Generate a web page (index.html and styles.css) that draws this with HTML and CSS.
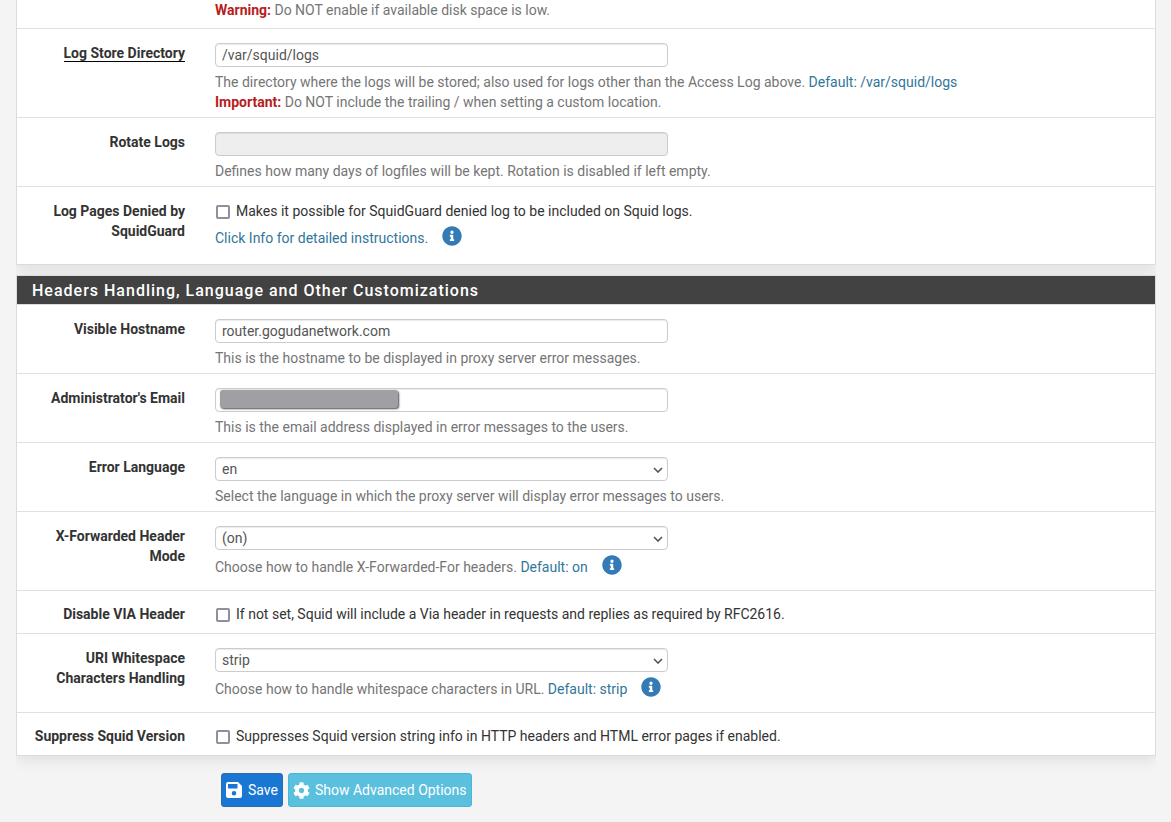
FILE: index.html
```html
<!DOCTYPE html>
<html lang="en">
<head>
    <meta charset="UTF-8">
    <meta name="viewport" content="width=device-width, initial-scale=1.0">
    <title>Squid Proxy Server: General</title>
    <link rel="stylesheet" href="styles.css">
</head>
<body>
    <!-- Shared icons -->
    <svg class="icon-defs" aria-hidden="true">
        <symbol id="icon-info" viewBox="0 0 512 512">
            <path fill="currentColor" d="M256 8C119 8 8 119 8 256s111 248 248 248 248-111 248-248S393 8 256 8zm0 110a42 42 0 1 1 0 84 42 42 0 0 1 0-84zm56 254a12 12 0 0 1-12 12h-88a12 12 0 0 1-12-12v-24a12 12 0 0 1 12-12h12v-64h-12a12 12 0 0 1-12-12v-24a12 12 0 0 1 12-12h64a12 12 0 0 1 12 12v100h12a12 12 0 0 1 12 12z"/>
        </symbol>
    </svg>

    <form class="container">
        <section class="panel panel-first">
            <div class="form-group form-group-cut">
                <div class="control-label"></div>
                <div class="controls">
                    <div class="help-block"><strong class="text-danger">Warning:</strong> Do NOT enable if available disk space is low.</div>
                </div>
            </div>
            <div class="form-group">
                <label class="control-label" for="log_dir"><span class="element-required">Log Store Directory</span></label>
                <div class="controls">
                    <input class="form-control" type="text" id="log_dir" value="/var/squid/logs">
                    <div class="help-block">
                        The directory where the logs will be stored; also used for logs other than the Access Log above. <span class="text-info">Default: /var/squid/logs</span><br>
                        <strong class="text-danger">Important:</strong> Do NOT include the trailing / when setting a custom location.
                    </div>
                </div>
            </div>
            <div class="form-group">
                <label class="control-label" for="log_rotate">Rotate Logs</label>
                <div class="controls">
                    <input class="form-control" type="text" id="log_rotate" disabled>
                    <div class="help-block">Defines how many days of logfiles will be kept. Rotation is disabled if left empty.</div>
                </div>
            </div>
            <div class="form-group">
                <label class="control-label" for="log_sqd">Log Pages Denied by SquidGuard</label>
                <div class="controls">
                    <label class="chkbox"><input type="checkbox" id="log_sqd"> Makes it possible for SquidGuard denied log to be included on Squid logs.</label>
                    <div class="help-block help-info">
                        <span class="text-info">Click Info for detailed instructions.</span>
                        <a class="info-link" href="#" aria-label="Info"><svg><use href="#icon-info"/></svg></a>
                    </div>
                </div>
            </div>
        </section>

        <section class="panel">
            <h2 class="panel-title">Headers Handling, Language and Other Customizations</h2>
            <div class="form-group">
                <label class="control-label" for="visible_hostname">Visible Hostname</label>
                <div class="controls">
                    <input class="form-control" type="text" id="visible_hostname" value="router.gogudanetwork.com">
                    <div class="help-block">This is the hostname to be displayed in proxy server error messages.</div>
                </div>
            </div>
            <div class="form-group">
                <label class="control-label" for="admin_email">Administrator's Email</label>
                <div class="controls">
                    <div class="masked">
                        <input class="form-control" type="text" id="admin_email">
                        <span class="mask"></span>
                    </div>
                    <div class="help-block">This is the email address displayed in error messages to the users.</div>
                </div>
            </div>
            <div class="form-group">
                <label class="control-label" for="error_language">Error Language</label>
                <div class="controls">
                    <div class="select">
                        <select class="form-control" id="error_language">
                            <option>en</option>
                        </select>
                        <svg class="caret" viewBox="0 0 10 6"><path d="M1 1l4 4 4-4"/></svg>
                    </div>
                    <div class="help-block">Select the language in which the proxy server will display error messages to users.</div>
                </div>
            </div>
            <div class="form-group">
                <label class="control-label" for="xforward_mode">X-Forwarded Header Mode</label>
                <div class="controls">
                    <div class="select">
                        <select class="form-control" id="xforward_mode">
                            <option>(on)</option>
                        </select>
                        <svg class="caret" viewBox="0 0 10 6"><path d="M1 1l4 4 4-4"/></svg>
                    </div>
                    <div class="help-block help-info">
                        <span>Choose how to handle X-Forwarded-For headers. <span class="text-info">Default: on</span></span>
                        <a class="info-link" href="#" aria-label="Info"><svg><use href="#icon-info"/></svg></a>
                    </div>
                </div>
            </div>
            <div class="form-group form-group-check">
                <label class="control-label" for="disable_via">Disable VIA Header</label>
                <div class="controls">
                    <label class="chkbox"><input type="checkbox" id="disable_via"> If not set, Squid will include a Via header in requests and replies as required by RFC2616.</label>
                </div>
            </div>
            <div class="form-group">
                <label class="control-label" for="uri_whitespace">URI Whitespace Characters Handling</label>
                <div class="controls">
                    <div class="select">
                        <select class="form-control" id="uri_whitespace">
                            <option>strip</option>
                        </select>
                        <svg class="caret" viewBox="0 0 10 6"><path d="M1 1l4 4 4-4"/></svg>
                    </div>
                    <div class="help-block help-info">
                        <span>Choose how to handle whitespace characters in URL. <span class="text-info">Default: strip</span></span>
                        <a class="info-link" href="#" aria-label="Info"><svg><use href="#icon-info"/></svg></a>
                    </div>
                </div>
            </div>
            <div class="form-group form-group-check">
                <label class="control-label" for="disable_version">Suppress Squid Version</label>
                <div class="controls">
                    <label class="chkbox"><input type="checkbox" id="disable_version"> Suppresses Squid version string info in HTTP headers and HTML error pages if enabled.</label>
                </div>
            </div>
        </section>

        <div class="actions">
            <button class="btn btn-primary" type="submit">
                <svg viewBox="0 0 16 16"><path fill="currentColor" fill-rule="evenodd" d="M2 0h10l4 4v10a2 2 0 0 1-2 2H2a2 2 0 0 1-2-2V2a2 2 0 0 1 2-2zm0 2v4.500h9.500V2zm6 7a2.300 2.300 0 1 0 0 4.600A2.300 2.300 0 0 0 8 9z"/></svg>
                Save
            </button>
            <button class="btn btn-info" type="button">
                <svg viewBox="0 0 512 512"><path fill="currentColor" d="M487.400 315.700l-42.600-24.600c4.300-23.200 4.300-47 0-70.200l42.600-24.600c4.900-2.800 7.100-8.600 5.500-14-11.100-35.600-30-67.800-54.700-94.600-3.800-4.100-10-5.100-14.800-2.300L380.800 110c-17.900-15.400-38.500-27.300-60.800-35.100V25.800c0-5.600-3.900-10.500-9.400-11.700-36.700-8.200-74.300-7.800-109.200 0-5.500 1.200-9.400 6.100-9.400 11.700V75c-22.200 7.900-42.800 19.800-60.800 35.100L88.700 85.500c-4.900-2.800-11-1.900-14.800 2.300-24.700 26.700-43.600 58.900-54.700 94.600-1.700 5.400.6 11.200 5.500 14L67.300 221c-4.300 23.200-4.300 47 0 70.200l-42.600 24.600c-4.900 2.800-7.100 8.600-5.500 14 11.100 35.600 30 67.800 54.700 94.600 3.800 4.100 10 5.100 14.800 2.300l42.600-24.600c17.900 15.400 38.500 27.300 60.800 35.100v49.200c0 5.600 3.900 10.500 9.400 11.700 36.700 8.200 74.300 7.800 109.200 0 5.500-1.200 9.400-6.100 9.400-11.700v-49.200c22.200-7.900 42.800-19.800 60.800-35.100l42.600 24.600c4.900 2.800 11 1.900 14.800-2.300 24.700-26.700 43.600-58.900 54.700-94.600 1.500-5.500-.7-11.300-5.600-14.100zM256 336c-44.100 0-80-35.900-80-80s35.900-80 80-80 80 35.900 80 80-35.900 80-80 80z"/></svg>
                Show Advanced Options
            </button>
        </div>
    </form>
</body>
</html>
```
FILE: styles.css
```css
* {
    box-sizing: border-box;
}

body {
    margin: 0;
    background: #f4f4f4;
    color: #333;
    font-family: Roboto, "Liberation Sans", sans-serif;
    font-size: 14px;
    line-height: 20px;
}

.icon-defs {
    display: none;
}

.container {
    margin: 0 15px 0 16px;
    overflow: hidden;
}

.panel {
    margin-bottom: 10px;
    background: #fff;
    border: 1px solid #dcdcdc;
    box-shadow: 0 4px 14px rgba(0, 0, 0, 0.09);
}

.panel-first {
    padding-bottom: 3px;
    border-top: 0;
}

.panel-title {
    margin: 0;
    padding: 5px 15px 3px;
    background: #424242;
    border-bottom: 1px solid #dcdcdc;
    color: #fff;
    font-size: 16px;
    font-weight: 500;
    letter-spacing: 1px;
}

/* Rows */
.form-group {
    display: flex;
    padding: 14px 0 5px;
    border-bottom: 1px solid #e0e0e0;
}

.form-group:last-child {
    border-bottom: 0;
}

.form-group-cut {
    padding: 0 0 8px;
}

.form-group-cut .help-block {
    margin-top: 0;
}

.form-group-check {
    padding: 13px 0 9px;
}

.control-label {
    flex: 0 0 183px;
    padding: 0 15px;
    font-weight: bold;
    text-align: right;
}

.element-required {
    border-bottom: 1px solid #000;
}

.controls {
    flex: 1;
    padding: 0 15px;
}

/* Inputs */
.form-control {
    display: block;
    width: 49%;
    height: 24px;
    padding: 0 6px;
    background: #fff;
    border: 1px solid #ccc;
    border-radius: 4px;
    box-shadow: inset 0 1px 1px rgba(0, 0, 0, 0.08);
    color: #555;
    font: inherit;
    appearance: none;
}

.form-control:disabled {
    background: #eee;
}

.select,
.masked {
    position: relative;
    width: 49%;
}

.select .form-control,
.masked .form-control {
    width: 100%;
}

.caret {
    position: absolute;
    right: 5px;
    top: 10px;
    width: 10px;
    height: 6px;
    fill: none;
    stroke: #555;
    stroke-width: 1.6;
    pointer-events: none;
}

.mask {
    position: absolute;
    left: 5px;
    top: 2px;
    width: 178px;
    height: 18px;
    background: #a09fa4;
    border-radius: 3px;
    box-shadow: 1px 1px 2px rgba(0, 0, 0, 0.7);
}

.chkbox {
    display: flex;
    align-items: center;
    gap: 6px;
}

.chkbox input {
    width: 14px;
    height: 14px;
    margin: 2px 0 0 1px;
    background: #fff;
    border: 2px solid #8f8f9d;
    border-radius: 2px;
    appearance: none;
}

.chkbox input:checked {
    background: #1976d2;
}

.help-block {
    margin-top: 5px;
    color: #757575;
}

.help-info {
    display: flex;
    align-items: flex-start;
    gap: 14px;
    min-height: 30px;
}

.help-info > span {
    padding-top: 2px;
}

.text-danger {
    color: #b71c1c;
}

.text-info {
    color: #31769a;
}

.info-link {
    color: #337ab7;
}

.info-link svg {
    display: block;
    width: 20px;
    height: 20px;
}

/* Buttons */
.actions {
    display: flex;
    gap: 5px;
    padding: 7px 0 15px 205px;
}

.btn {
    display: flex;
    align-items: center;
    gap: 5px;
    height: 34px;
    padding: 0 4px;
    border: 1px solid;
    border-radius: 3px;
    color: #fff;
    font: inherit;
    cursor: pointer;
}

.btn svg {
    width: 17px;
    height: 17px;
}

.btn-primary {
    gap: 6px;
    background: #1976d2;
    border-color: #2e6da4;
}

.btn-primary svg {
    width: 16px;
    height: 16px;
}

.btn-info {
    background: #5bc0de;
    border-color: #46b8da;
}
```
